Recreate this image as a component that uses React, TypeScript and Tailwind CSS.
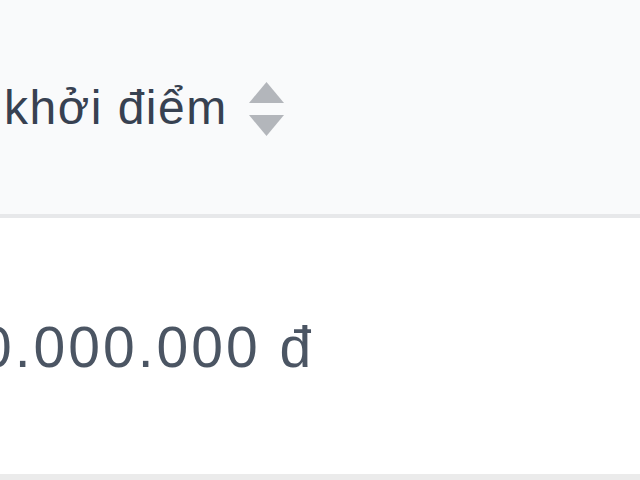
import React from "react";

export default function App() {
  return (
    <div className="w-[640px] h-[480px] overflow-hidden bg-white" style={{ fontFamily: '"Liberation Sans", Arial, sans-serif' }}>
      <div className="h-[218px] bg-[#f9fafb] flex items-center pl-[4px] border-b-4 border-[#e7e8ea]">
        <span className="text-[48px] leading-none text-[#374151] tracking-[1.5px] pt-[2px] whitespace-nowrap">khởi điểm</span>
        <svg className="ml-[20px] mt-[4px]" width="37" height="54" viewBox="0 0 37 54">
          <polygon points="18.5,0 36,21 1,21" fill="#b3b6bb" />
          <polygon points="1,33 36,33 18.5,54" fill="#b3b6bb" />
        </svg>
      </div>
      <div className="h-[262px] bg-white flex items-center overflow-hidden border-b-[6px] border-[#ebebeb] pt-[2px]">
        <span className="ml-[-20px] text-[57px] leading-none text-[#4b5563] tracking-[3px] whitespace-nowrap">0.000.000 đ</span>
      </div>
    </div>
  );
}
